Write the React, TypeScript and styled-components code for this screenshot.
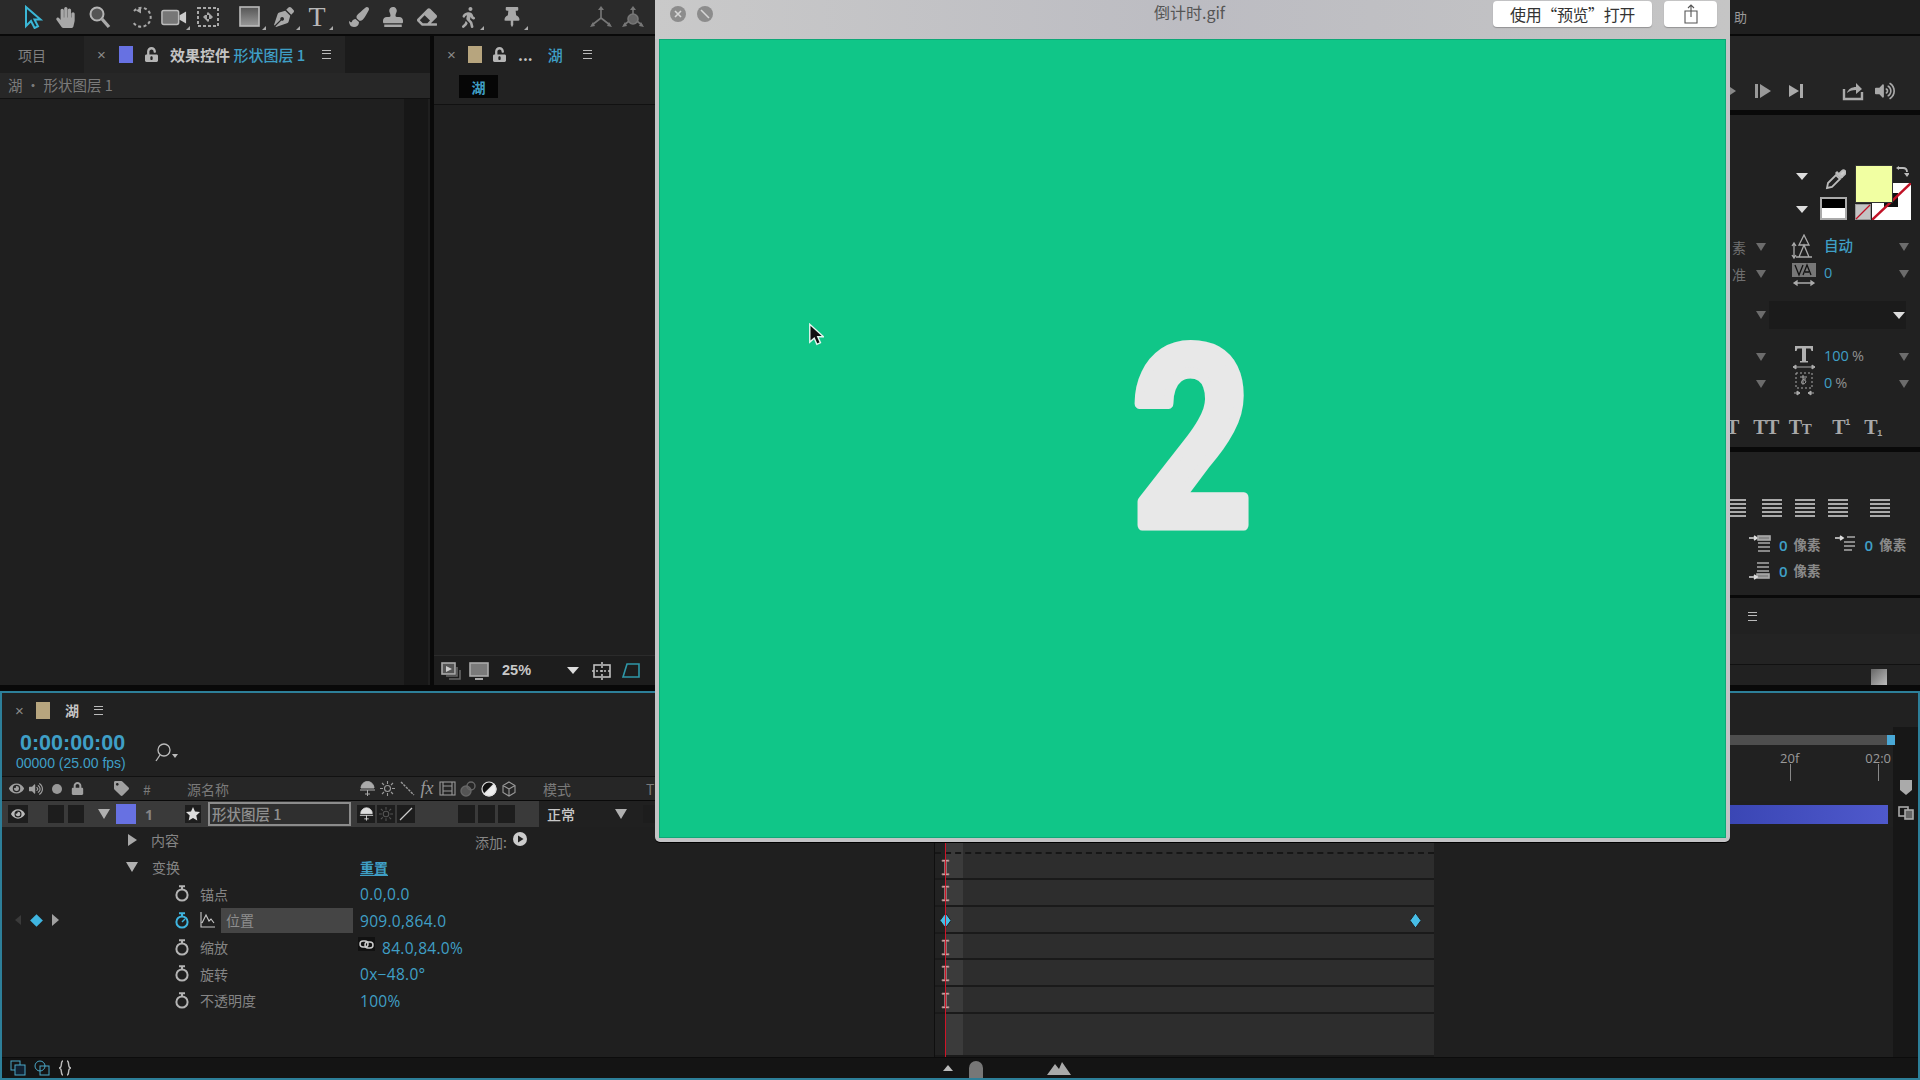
import React from "react";
import styled, { createGlobalStyle } from "styled-components";
import { FaHandPaper, FaPenNib, FaPaintBrush, FaStamp, FaEraser, FaWalking, FaThumbtack, FaVolumeUp, FaEye, FaLock, FaUnlockAlt, FaTag } from "react-icons/fa";

const BLUE = "#3f9fc6";
const LABEL = "#858585";
const ICON = "#a8a8a8";

const Global = createGlobalStyle`
  html, body { margin: 0; padding: 0; background: #090909; }
  * { box-sizing: border-box; }
  body { font-family: "Noto Sans CJK SC", "Liberation Sans", sans-serif; }
`;

const Page = styled.div`
  position: relative; width: 1920px; height: 1080px; overflow: hidden; background: #090909;
  display: flex; flex-direction: column; color: ${LABEL}; font-size: 14px; line-height: 1;
`;

/* ---------- toolbar ---------- */
const Toolbar = styled.div`
  height: 34px; margin-bottom: 2px; background: #2a2a2a; display: flex; align-items: center; flex: none;
`;
const Tool = styled.div<{ $ml: number; $w?: number; $corner?: boolean }>`
  position: relative; width: ${p => p.$w ?? 26}px; height: 26px; margin-left: ${p => p.$ml}px;
  display: flex; align-items: center; justify-content: center; color: ${ICON}; flex: none;
  &::after {
    content: ""; display: ${p => (p.$corner ? "block" : "none")}; position: absolute; right: -3px; bottom: 0;
    border-left: 4px solid transparent; border-bottom: 4px solid #aaa;
  }
`;
const ToolT = styled.span`
  font: 400 28px "Liberation Serif", serif; color: #b8b8b8;
`;
const HelpMenu = styled.div`
  margin-left: auto; width: 190px; height: 34px; background: #1f1f1f; padding: 10px 0 0 4px;
  font-size: 13px; color: #9a9a9a;
`;

/* ---------- main area ---------- */
const Main = styled.div`
  height: 655px; flex: none; display: flex; gap: 4px; padding-bottom: 6px;
`;
const LeftPanel = styled.section`
  width: 430px; margin-left: 0; background: #212121; display: flex; flex-direction: column; flex: none;
`;
const TabRow = styled.div`
  height: 37px; display: flex; align-items: center; background: #1b1b1b; flex: none;
`;
const ProjectTab = styled.div`
  width: 84px; height: 100%; padding-left: 18px; display: flex; align-items: center; color: #808080; background: #1e1e1e;
`;
const ActiveTab = styled.div`
  width: 261px; height: 100%; background: #242424; display: flex; align-items: center; padding-left: 13px;
`;
const Close = styled.span`
  font: 400 15px "Liberation Sans", sans-serif; color: #8a8a8a; width: 18px; flex: none;
`;
const Swatch = styled.span<{ $c: string; $ml?: number }>`
  width: 14px; height: 17px; background: ${p => p.$c}; margin-left: ${p => p.$ml ?? 0}px; flex: none; display: block;
`;
const LockIcon = styled(FaUnlockAlt)<{ $ml: number }>`
  width: 13px; height: 15px; color: #b5b5b5; flex: none; margin-left: ${p => p.$ml}px;
`;
const TabTitle = styled.span<{ $ml: number }>`
  margin-left: ${p => p.$ml}px; font-weight: 700; font-size: 15px; color: #c4c4c4; white-space: nowrap;
`;
const Accent = styled.span`
  color: ${BLUE}; font-weight: 500;
`;
const Burger = styled.span<{ $ml: number; $dim?: boolean }>`
  margin-left: ${p => p.$ml}px; width: 9px; height: 9px; flex: none; display: block;
  border-top: 1.5px solid #bbb; border-bottom: 1.5px solid #bbb; position: relative;
  &::after { content: ""; position: absolute; left: 0; right: 0; top: 2.2px; border-top: 1.5px solid #bbb; }
`;
const SubHeader = styled.div`
  height: 26px; padding: 0 0 0 8px; display: flex; align-items: center; background: #272727; border-bottom: 1px solid #111;
  color: #7b7b7b; font-size: 14.5px; flex: none;
`;
const LeftBody = styled.div`
  flex: 1; display: flex; justify-content: flex-end; background: #1f1f1f; padding-right: 2px;
`;
const Scroll = styled.div`
  width: 24px; background: #171717;
`;

const ViewerPanel = styled.section`
  width: 221px; background: #222; display: flex; flex-direction: column; flex: none;
`;
const ViewerTabs = styled.div`
  height: 37px; display: flex; align-items: center; padding-left: 13px; flex: none;
`;
const ViewerChip = styled.div`
  margin: 2px 0 0 25px; width: 39px; height: 23px; background: #060606; color: ${BLUE}; display: flex; align-items: center;
  justify-content: center; font-size: 14px; font-weight: 700; flex: none;
`;
const ViewerBody = styled.div`
  flex: 1; margin-top: 6px; border-top: 1px solid #111; background: #1f1f1f;
`;
const ViewerFoot = styled.div`
  height: 30px; border-top: 1px solid #2b2b2b; display: flex; align-items: center; background: #1d1d1d; flex: none; color: ${ICON};
`;
const FootSlot = styled.span<{ $ml: number }>`
  display: flex; margin-left: ${p => p.$ml}px; flex: none;
`;
const Zoom = styled.span`
  margin-left: 13px; width: 36px; font-size: 14.5px; font-weight: 700; color: #c8c8c8; font-family: "Liberation Sans", sans-serif;
`;
const WhiteDown = styled.span<{ $ml?: number; $c?: string }>`
  display: block; width: 0; height: 0; margin-left: ${p => p.$ml ?? 0}px; flex: none;
  border-left: 6px solid transparent; border-right: 6px solid transparent; border-top: 7px solid ${p => p.$c ?? "#d0d0d0"};
`;
const Spacer = styled.div`
  flex: 1;
`;

/* ---------- right column ---------- */
const RightCol = styled.aside`
  width: 190px; margin-left: auto; display: flex; flex-direction: column; gap: 5px; flex: none;
`;
const TransportPanel = styled.div`
  height: 74px; background: #242424; padding: 42px 0 0 0; display: flex; align-items: flex-start; color: ${ICON}; flex: none;
`;
const CharPanel = styled.div`
  height: 332px; background: #212121; padding-top: 50px; flex: none;
`;
const ColorRow = styled.div`
  height: 60px; display: flex; flex: none; position: relative;
`;
const ColorDrops = styled.div`
  width: 66px; margin-left: 66px; padding-top: 8px; display: flex; flex-direction: column; gap: 26px;
`;
const SwatchBox = styled.div`
  position: relative; width: 60px; height: 58px; margin-left: auto; margin-right: 11px;
`;
const Fill = styled.div`
  position: absolute; left: 0; top: 0; width: 38px; height: 38px; background: #f1ffa2; border: 1px solid #333; z-index: 2;
`;
const Stroke = styled.svg`
  position: absolute; left: 17px; top: 18px; width: 39px; height: 37px;
`;
const NoneSwatch = styled.svg`
  position: absolute; left: 0; top: 39px; width: 16px; height: 16px;
`;
const SwapIcon = styled.svg`
  position: absolute; right: 0; top: 0; width: 14px; height: 15px;
`;
const BWSwatch = styled.div`
  position: absolute; left: 90px; top: 32px; width: 27px; height: 23px; border: 2px solid #aaa;
  background: linear-gradient(#000 0 45%, #fff 45% 100%);
`;
const Dropper = styled.svg`
  position: absolute; left: 94px; top: 2px; width: 22px; height: 24px;
`;
const MetricRow = styled.div<{ $mt?: number }>`
  height: 27px; margin-top: ${p => p.$mt ?? 0}px; display: grid; align-items: center; flex: none;
  grid-template-columns: 24px 14px 21px 30px 5px 70px 20px 6px;
`;
const CutText = styled.span`
  color: #6f6f6f; font-size: 14px; text-align: left; padding-left: 2px;
`;
const GreyDown = styled.span`
  display: block; justify-self: center; width: 0; height: 0;
  border-left: 5px solid transparent; border-right: 5px solid transparent; border-top: 8px solid #6c6c6c;
`;
const IconCell = styled.span`
  grid-column: 4; display: flex; justify-content: center; color: #aaa;
`;
const Value = styled.span`
  grid-column: 6; color: ${BLUE}; font-size: 14.5px; font-weight: 500; font-family: "Open Sans", "Noto Sans CJK SC", sans-serif;
`;
const Unit = styled.span`
  color: #909090; margin-left: 3px;
`;
const GreyDownEnd = styled(GreyDown)`
  grid-column: 7;
`;
const DropRow = styled.div`
  height: 28px; margin-top: 14px; display: grid; grid-template-columns: 24px 14px 1px 137px 1fr; align-items: center;
`;
const DropBg = styled.span`
  height: 28px; background: #1b1b1b; display: flex; align-items: center; justify-content: flex-end; padding-right: 1px;
`;
const CapsRow = styled.div`
  height: 30px; margin-top: 15px; display: flex; align-items: center; font: 700 20px "Liberation Serif", serif; color: #a8a8a8;
`;
const Cap = styled.span<{ $w: number; $ml: number }>`
  width: ${p => p.$w}px; margin-left: ${p => p.$ml}px; white-space: nowrap; flex: none; display: block;
  text-align: center; letter-spacing: -0.5px;
`;
const SmallCap = styled.span`
  font-size: 15px;
`;
const Script = styled.span<{ $low?: boolean }>`
  font-size: 9px; vertical-align: ${p => (p.$low ? "-2px" : "9px")}; font-family: "Liberation Sans", sans-serif;
`;
const ParaPanel = styled.div`
  height: 143px; background: #212121; padding-top: 41px; flex: none;
`;
const AlignRow = styled.div`
  height: 30px; display: flex; align-items: center; color: #aaa;
`;
const AlignIcon = styled.svg<{ $ml: number }>`
  width: 20px; height: 20px; margin-left: ${p => p.$ml}px; flex: none; display: block;
`;
const IndentRow = styled.div<{ $mt?: number }>`
  height: 26px; margin-top: ${p => p.$mt ?? 0}px; display: flex; align-items: center; color: #aaa; font-weight: 700; font-size: 13.5px;
`;
const IndentNum = styled.span<{ $ml: number }>`
  margin-left: ${p => p.$ml}px; color: ${BLUE}; font-size: 15px; font-family: "Open Sans", sans-serif; font-weight: 600; flex: none;
`;
const IndentUnit = styled.span`
  margin-left: 6px; color: #8a8a8a; flex: none;
`;
const IndentIcon = styled.svg<{ $ml: number }>`
  width: 22px; height: 20px; margin-left: ${p => p.$ml}px; flex: none; display: block;
`;
const LastPanel = styled.div`
  flex: 1; background: #212121; display: flex; flex-direction: column; margin-top: -2px;
`;
const LastHead = styled.div`
  height: 36px; display: flex; align-items: center; padding-left: 18px; flex: none;
`;
const LastBody = styled.div`
  flex: 1; background: #232323;
`;
const LastFoot = styled.div`
  height: 21px; border-top: 1px solid #111; display: flex; padding-left: 141px; align-items: flex-end; flex: none;
`;
const FootPage = styled.span`
  width: 16px; height: 16px; background: linear-gradient(135deg, #666, #bbb); display: block;
`;

/* ---------- timeline ---------- */
const Timeline = styled.section`
  flex: 1; border: 2px solid #2d7f99; background: #1f1f1f; display: flex; flex-direction: column; position: relative;
`;
const TlTabs = styled.div`
  height: 34px; display: flex; align-items: center; padding-left: 13px; flex: none; background: #212121;
`;
const TlTitle = styled.span`
  margin-left: 15px; font-weight: 700; color: #c4c4c4; font-size: 14px;
`;
const TlBody = styled.div`
  flex: 1; display: flex; min-height: 0;
`;
const LayerPane = styled.div`
  width: 932px; flex: none; display: flex; flex-direction: column; background: #1f1f1f;
`;
const TimeRow = styled.div`
  height: 49px; display: flex; align-items: flex-start; padding: 4px 0 0 14px; flex: none; background: #212121;
`;
const TimeText = styled.div`
  width: 135px; flex: none;
`;
const TimeCode = styled.div`
  color: ${BLUE}; font: 700 21.5px "Liberation Sans", sans-serif; line-height: 24px; margin-left: 4px;
`;
const Fps = styled.div`
  color: ${BLUE}; font: 400 14px "Liberation Sans", sans-serif; line-height: 17px; white-space: nowrap;
`;
const SearchWrap = styled.span`
  margin-top: 11px; margin-left: 4px; display: flex; color: #bbb;
`;
const ColHeader = styled.div`
  height: 25px; display: flex; align-items: center; padding-left: 4px; background: #262626; border-top: 1px solid #111;
  border-bottom: 1px solid #090909; flex: none; color: #7a7a7a;
`;
const Cell = styled.span<{ $w: number; $pl?: number }>`
  width: ${p => p.$w}px; padding-left: ${p => p.$pl ?? 0}px; display: flex; align-items: center;
  justify-content: ${p => (p.$pl === undefined ? "center" : "flex-start")}; flex: none; color: #a0a0a0;
`;
const HeadText = styled.span`
  color: #7a7a7a; font-size: 14px; white-space: nowrap;
`;
const FxText = styled.span`
  font: italic 400 18px "Liberation Serif", serif; color: #999;
`;
const LayerRow = styled.div`
  height: 26px; display: flex; align-items: center; padding-left: 4px; background: linear-gradient(90deg, #3a3a3a 0 537px, #202020 537px); flex: none;
`;
const DarkBox = styled.span<{ $ml?: number; $w?: number }>`
  width: ${p => p.$w ?? 16}px; height: 18px; background: #1d1d1d; margin-left: ${p => p.$ml ?? 0}px; flex: none; display: flex;
  align-items: center; justify-content: center; color: #b8b8b8;
`;
const RightTri = styled.span<{ $ml?: number; $c?: string }>`
  display: block; width: 0; height: 0; margin-left: ${p => p.$ml ?? 0}px; flex: none;
  border-top: 6px solid transparent; border-bottom: 6px solid transparent; border-left: 9px solid ${p => p.$c ?? "#a8a8a8"};
`;
const DownTri = styled.span<{ $ml?: number }>`
  display: block; width: 0; height: 0; margin-left: ${p => p.$ml ?? 0}px; flex: none;
  border-left: 6px solid transparent; border-right: 6px solid transparent; border-top: 10px solid #b0b0b0;
`;
const LayerColor = styled.span<{ $ml: number }>`
  width: 20px; height: 20px; background: #6771e2; margin-left: ${p => p.$ml}px; flex: none; display: block;
`;
const LayerNum = styled.span<{ $ml: number }>`
  width: 12px; margin-left: ${p => p.$ml}px; font: 700 14px "Open Sans", sans-serif; color: #858585; flex: none;
`;
const NameBox = styled.span<{ $ml: number }>`
  width: 143px; height: 24px; margin-left: ${p => p.$ml}px; border: 2px solid #8c8c8c; background: #2f2f2f; color: #8f8f8f;
  padding-left: 2px; display: flex; align-items: center; font-size: 14.5px; font-weight: 500; flex: none;
`;
const ModeText = styled.span`
  width: 68px; margin-left: 32px; color: #c8c8c8; font-weight: 500; font-size: 14px; flex: none;
`;
const GroupRow = styled.div`
  height: 26.7px; display: flex; align-items: center; padding-left: 126px; flex: none;
`;
const GroupName = styled.span<{ $w: number }>`
  width: ${p => p.$w}px; margin-left: 14px; color: ${LABEL}; font-size: 14px; flex: none;
`;
const AddLabel = styled.span`
  color: #858585; font-size: 14px; margin-right: 6px; margin-top: 3px;
`;
const AddButton = styled.svg`
  width: 14px; height: 14px; margin-top: -3px; flex: none;
`;
const Reset = styled.span`
  color: ${BLUE}; font-weight: 700; font-size: 14px; text-decoration: underline; text-underline-offset: 2px;
`;
const PropRow = styled.div`
  height: 26.7px; display: grid; grid-template-columns: 172px 18px 8px 160px 1fr; align-items: center; flex: none;
`;
const KeyNav = styled.span`
  display: flex; align-items: center; padding-left: 13px;
`;
const KeyDiamond = styled.span`
  width: 9px; height: 9px; margin-left: 11px; background: #3fb5e0; transform: rotate(45deg); flex: none; display: block;
`;
const NavLeft = styled.span`
  display: block; width: 0; height: 0; border-top: 5px solid transparent; border-bottom: 5px solid transparent; border-right: 6px solid #3a3a3a; flex: none;
`;
const NavRight = styled.span`
  margin-left: 11px; display: block; width: 0; height: 0; border-top: 6px solid transparent; border-bottom: 6px solid transparent;
  border-left: 7px solid #a0a0a0; flex: none;
`;
const Watch = styled.svg`
  width: 16px; height: 17px; grid-column: 2;
`;
const PropLabel = styled.span`
  grid-column: 4; color: ${LABEL}; font-size: 14px; display: flex; align-items: center;
`;
const LabelBox = styled.span`
  width: 132px; height: 25px; margin-left: 6px; background: #454545; padding-left: 5px; display: flex; align-items: center; color: #8e8e8e; flex: none;
`;
const PropValue = styled.span`
  grid-column: 5; color: ${BLUE}; font: 500 15.5px "Open Sans", sans-serif; letter-spacing: 0.3px; display: flex; align-items: center;
  white-space: nowrap; padding-top: 1px;
`;
const LinkBadge = styled.span`
  width: 17px; height: 14px; background: #111; margin: -7px 7px 0 -2px; display: flex; align-items: center; justify-content: center; color: #bbb; flex: none;
`;

const TrackPane = styled.div`
  flex: 1; display: flex; flex-direction: column; position: relative; border-left: 1px solid #0f0f0f; min-width: 0;
`;
const Ruler = styled.div`
  height: 74px; flex: none; display: flex; justify-content: flex-end; background: #212121;
`;
const RulerInner = styled.div`
  width: 166px; margin-right: -2px; padding-top: 8px; display: flex; flex-direction: column; font: 400 13px "Open Sans", sans-serif; color: #9a9a9a;
`;
const NavBar = styled.div`
  height: 10px; background: #4e4e4e; position: relative; flex: none;
  &::after { content: ""; position: absolute; right: 0; top: 0; width: 8px; height: 10px; background: #49a8d6; }
`;
const RulerMarks = styled.div`
  margin-top: 4px; display: flex; justify-content: flex-end; gap: 66px; white-space: nowrap; padding-right: 4px;
`;
const Mark = styled.span`
  position: relative; display: block; padding-bottom: 14px;
  &::after { content: ""; position: absolute; left: 50%; top: 15px; height: 17px; border-left: 1px solid #888; }
`;
const BarRow = styled.div`
  height: 26px; flex: none; display: flex; justify-content: flex-end; align-items: center; padding-right: 5px; background: #202020;
`;
const LayerBar = styled.div`
  width: 160px; height: 19px; background: linear-gradient(90deg, #3a46b4, #4f59cc);
`;
const TrackRow = styled.div<{ $grow?: boolean }>`
  height: ${p => (p.$grow ? "auto" : "26.7px")}; flex: ${p => (p.$grow ? 1 : "none")}; display: flex; position: relative; align-items: center;
`;
const TrackFill = styled.div<{ $dash?: boolean }>`
  width: 499px; height: 100%; flex: none; position: relative; display: flex; align-items: center;
  background: linear-gradient(90deg, #222 0 10px, #3b3b3b 10px 28px, #2d2d2d 28px);
  ${p => (p.$dash ? "border-bottom: 2px dashed #161616;" : "box-shadow: inset 0 -2px 0 #1a1a1a;")}
`;
const IBeam = styled.svg`
  position: absolute; left: 6px; width: 9px; height: 17px;
`;
const KeyFrame = styled.svg<{ $left: number }>`
  position: absolute; left: ${p => p.$left}px; width: 11px; height: 15px;
`;
const Playhead = styled.div`
  position: absolute; left: 10px; top: 100px; bottom: 0; border-left: 1px solid #d01428; z-index: 3;
`;
const SideStrip = styled.div`
  width: 25px; flex: none; background: #171717; display: flex; flex-direction: column; align-items: center; color: #aaa;
`;
const StripIcon = styled.span<{ $mt: number }>`
  margin-top: ${p => p.$mt}px; display: flex;
`;
const TlFoot = styled.div`
  height: 21px; flex: none; background: #141414; border-top: 1px solid #0c0c0c; display: flex; align-items: center; padding-left: 8px; color: ${ICON};
`;
const FootIcon = styled.svg<{ $ml: number }>`
  width: 16px; height: 16px; margin-left: ${p => p.$ml}px; flex: none; display: block;
`;
const Thumb = styled.span`
  width: 14px; height: 17px; margin-left: 13px; background: #777; border-radius: 7px 7px 0 0; flex: none; display: block; align-self: flex-end;
`;
const ZoomSlot = styled.span`
  width: 64px; flex: none; display: block;
`;

/* ---------- floating preview window ---------- */
const Win = styled.div`
  position: absolute; left: 655px; top: 0; width: 1075px; height: 842px; background: #c3c3c5; border-radius: 0 0 5px 5px;
  padding: 0 4px 4px; display: flex; flex-direction: column; box-shadow: 0 1px 0 #000; z-index: 5;
`;
const WinTitleBar = styled.div`
  height: 39px; flex: none; margin: 0 -4px; padding: 0 13px 12px 15px; display: flex; align-items: center;
  background: linear-gradient(90deg, #c9c9c9, #bcbcc2 50%, #c5c5c5);
`;
const TrafficDot = styled.span<{ $ml?: number }>`
  width: 16px; height: 16px; border-radius: 50%; background: #8c8c8c; color: #cfcfcf; margin-left: ${p => p.$ml ?? 0}px;
  display: flex; align-items: center; justify-content: center; flex: none;
`;
const WinTitle = styled.span`
  flex: 1; text-align: center; color: #555; font-size: 16px; padding-left: 322px; margin-top: -3px; white-space: nowrap;
`;
const WinButton = styled.button<{ $w: number; $ml?: number }>`
  width: ${p => p.$w}px; height: 26px; background: #fff; border: 0; border-radius: 4px; padding: 0; margin-left: ${p => p.$ml ?? 0}px;
  display: flex; align-items: center; justify-content: center; flex: none; color: #333; font: 400 16px "Noto Sans CJK SC", sans-serif;
  letter-spacing: -0.4px; box-shadow: 0 1px 1px rgba(0,0,0,.25);
`;
const Stage = styled.div`
  flex: 1; background: #10c688; border: 1px solid #0ea877; position: relative; display: flex; align-items: center; justify-content: center;
`;
const Numeral = styled.svg`
  width: 160px; height: 230px; display: block; overflow: visible;
`;
const NumeralText = styled.text`
  font: 700 249px "Roboto", sans-serif; fill: #e8e8e8; stroke: #e8e8e8; stroke-width: 11px; stroke-linejoin: round;
`;
const Cursor = styled.svg`
  position: absolute; left: 148px; top: 283px; width: 16px; height: 24px;
`;

/* ---------- icons ---------- */
const S = (p: { w?: number; h?: number; vb?: string; children: React.ReactNode; fill?: string; stroke?: string; sw?: number }) => (
  <svg width={p.w ?? 24} height={p.h ?? 24} viewBox={p.vb ?? "0 0 24 24"} fill={p.fill ?? "none"} stroke={p.stroke ?? "currentColor"} strokeWidth={p.sw ?? 1.6}>
    {p.children}
  </svg>
);

const Arrow = () => (
  <S><path d="M6 2v19l5-5 3.6 7 3.4-1.7-3.5-6.8H20.5z" stroke="#3bb7d6" strokeWidth={2} fill="#1d2b30" /></S>
);
const Magnifier = () => (
  <S><circle cx="10" cy="9" r="6.5" fill="#555" stroke="#b5b5b5" strokeWidth={2} /><path d="M15 14l7 8" strokeWidth={3.4} stroke="#aaa" /></S>
);
const Rotate = () => (
  <S><path d="M5 6A9.5 9.5 0 1 1 4 17" strokeDasharray="3 2.4" strokeWidth={2} /><path d="M12 2.5l-5 3 5 3z" fill="currentColor" stroke="none" /></S>
);
const Camera = () => (
  <S w={28} vb="0 0 28 24"><rect x="1" y="5" width="18" height="15" rx="2" fill="#777" stroke="#bbb" /><path d="M20 10l7-4v13l-7-4z" fill="#ccc" stroke="none" /></S>
);
const PanBehind = () => (
  <S><rect x="2" y="3" width="20" height="18" strokeDasharray="3 2" strokeWidth={2} /><path d="M7 12l4-4v8zM17 12l-4-4v8zM12 7l-3 3h6zM12 17l-3-3h6z" fill="currentColor" stroke="none" /></S>
);
const RectTool = () => (
  <svg width="22" height="22" viewBox="0 0 22 22"><defs><linearGradient id="rg" x1="0" y1="0" x2="0" y2="1"><stop offset="0" stopColor="#555" /><stop offset="1" stopColor="#999" /></linearGradient></defs><rect x="1" y="1" width="19" height="19" fill="url(#rg)" stroke="#bbb" strokeWidth="1.6" /></svg>
);
const Axis = ({ circle }: { circle?: boolean }) => (
  <S stroke="#777"><path d="M12 13V3M12 13l-9 7M12 13l9 7" /><path d="M12 1l-3 4h6zM1 22l5-1-2-4zM23 22l-5-1 2-4z" fill="#777" stroke="none" />{circle && <circle cx="12" cy="14" r="5" fill="#666" />}</S>
);
const Stopwatch = ({ on }: { on?: boolean }) => (
  <Watch viewBox="0 0 16 17" fill="none" stroke={on ? "#3fb5e0" : "#b4b4b4"} strokeWidth="2">
    <path d="M5 1.2h6M8 1v3" /><circle cx="8" cy="10" r="5.6" />{on && <path d="M8 10l3-3" strokeWidth="1.5" />}
  </Watch>
);
const Ibeam = () => (
  <IBeam viewBox="0 0 9 17" fill="#e8c8c8" stroke="#8d6d6d" strokeWidth="0.8"><path d="M1 1h7v1.5H5.500v12H8V16H1v-1.5h2.500v-12H1z" /></IBeam>
);
const KeyMark = ({ left }: { left: number }) => (
  <KeyFrame $left={left} viewBox="0 0 11 15"><path d="M5.500 0L11 7.500 5.500 15 0 7.500z" fill="#47bde6" stroke="#222" strokeWidth="1" /></KeyFrame>
);
const AlignGlyph = ({ ml }: { ml: number }) => (
  <AlignIcon $ml={ml} viewBox="0 0 20 20" stroke="#aaa" strokeWidth="2"><path d="M0 2h20M0 6h20M0 10h20M0 14h20M0 18h20" /></AlignIcon>
);
const IndentGlyph = ({ ml, variant }: { ml: number; variant: 0 | 1 | 2 }) => (
  <IndentIcon $ml={ml} viewBox="0 0 22 20" stroke="#aaa" strokeWidth="1.6" fill="none">
    {variant === 0 && <><path d="M0 3h7M5 1l3 2-3 2" stroke="#ddd" /><rect x="9" y="1" width="12" height="4" fill="#888" /><path d="M9 8h12M9 12h12M9 16h12" /></>}
    {variant === 1 && <><path d="M0 3h7M5 1l3 2-3 2" stroke="#ddd" /><path d="M12 2h8M9 7h11M9 11h11M9 15h8" /></>}
    {variant === 2 && <><path d="M8 2h12M8 6h12M8 10h12" /><rect x="8" y="13" width="12" height="4" fill="#888" /><path d="M0 16h7M5 14l3 2-3 2" stroke="#ddd" /></>}
  </IndentIcon>
);

export default function App() {
  return (
    <Page>
      <Global />
      <Toolbar>
        <Tool $ml={19}><Arrow /></Tool>
        <Tool $ml={7}><FaHandPaper size={21} /></Tool>
        <Tool $ml={8}><Magnifier /></Tool>
        <Tool $ml={16}><Rotate /></Tool>
        <Tool $ml={7} $corner><Camera /></Tool>
        <Tool $ml={8}><PanBehind /></Tool>
        <Tool $ml={16} $corner><RectTool /></Tool>
        <Tool $ml={8} $corner><FaPenNib size={20} /></Tool>
        <Tool $ml={7} $corner><ToolT>T</ToolT></Tool>
        <Tool $ml={16}><FaPaintBrush size={20} /></Tool>
        <Tool $ml={8}><FaStamp size={20} /></Tool>
        <Tool $ml={8}><FaEraser size={20} /></Tool>
        <Tool $ml={15} $corner><FaWalking size={21} /></Tool>
        <Tool $ml={18} $corner><FaThumbtack size={20} /></Tool>
        <Tool $ml={63}><Axis /></Tool>
        <Tool $ml={6}><Axis circle /></Tool>
        <HelpMenu>助</HelpMenu>
      </Toolbar>

      <Main>
        <LeftPanel>
          <TabRow>
            <ProjectTab>项目</ProjectTab>
            <ActiveTab>
              <Close>×</Close>
              <Swatch $c="#6771e2" $ml={4} />
              <LockIcon $ml={12} />
              <TabTitle $ml={12}>效果控件 <Accent>形状图层 1</Accent></TabTitle>
              <Burger $ml={17} />
            </ActiveTab>
          </TabRow>
          <SubHeader>湖 • 形状图层 1</SubHeader>
          <LeftBody><Scroll /></LeftBody>
        </LeftPanel>

        <ViewerPanel>
          <ViewerTabs>
            <Close>×</Close>
            <Swatch $c="#b7a57e" $ml={3} />
            <LockIcon $ml={11} />
            <TabTitle $ml={12}>...</TabTitle>
            <TabTitle $ml={15}><Accent>湖</Accent></TabTitle>
            <Burger $ml={20} />
          </ViewerTabs>
          <ViewerChip>湖</ViewerChip>
          <ViewerBody />
          <ViewerFoot>
            <FootSlot $ml={7}><S w={20} h={20} vb="0 0 20 20"><rect x="1" y="2" width="13" height="11" fill="#555" stroke="#aaa" /><path d="M16 6v9H5M19 9v9H8" stroke="#666" /><path d="M5 5l6 3-6 3z" fill="#ccc" stroke="none" /></S></FootSlot>
            <FootSlot $ml={8}><S w={20} h={20} vb="0 0 20 20"><rect x="1" y="2" width="18" height="13" fill="#7a7a7a" stroke="#aaa" /><path d="M6 18h8" strokeWidth={2} /></S></FootSlot>
            <Zoom>25%</Zoom>
            <WhiteDown $ml={29} $c="#ddd" />
            <FootSlot $ml={13}><S w={20} h={20} vb="0 0 20 20" stroke="#c0c0c0"><rect x="2" y="4" width="16" height="12" /><path d="M10 1v18M0 10h20" strokeDasharray="2 2" /></S></FootSlot>
            <FootSlot $ml={9}><S w={20} h={20} vb="0 0 20 20" stroke="#2f97a8"><path d="M6 3h12v13H2z" /></S></FootSlot>
          </ViewerFoot>
        </ViewerPanel>

        <RightCol>
          <TransportPanel>
            <Tool $ml={-8} $w={18}><RightTri $c="#888" /></Tool>
            <Tool $ml={13} $w={20}><S w={18} h={18} vb="0 0 18 18" fill="#999" stroke="none"><rect x="1" y="2" width="3" height="14" /><path d="M6 2l11 7-11 7z" /></S></Tool>
            <Tool $ml={13} $w={20}><S w={18} h={18} vb="0 0 18 18" fill="#aaa" stroke="none"><path d="M2 3l10 6-10 6z" /><rect x="13" y="2" width="3" height="14" /></S></Tool>
            <Tool $ml={35} $w={24}><S w={22} h={22} vb="0 0 22 22" stroke="#aaa" sw={2.4}><path d="M2 9v10h18v-7" /><path d="M5 13c1-4 5-6 9-6V3l6 6-6 5v-4c-4 0-7 1-9 3z" fill="#aaa" stroke="none" /></S></Tool>
            <Tool $ml={8} $w={24}><FaVolumeUp size={20} /></Tool>
          </TransportPanel>

          <CharPanel>
            <ColorRow>
              <ColorDrops><WhiteDown $c="#ddd" /><WhiteDown $c="#ddd" /></ColorDrops>
              <Dropper viewBox="0 0 22 24" fill="none" stroke="#bbb" strokeWidth="1.8"><path d="M3 21l1-5 8-8 4 4-8 8z" /><path d="M12 5l6 6" strokeWidth="3" /><path d="M15 7l3-3a2 2 0 0 1 3 3l-3 3z" fill="#ccc" /></Dropper>
              <BWSwatch />
              <SwatchBox>
                <Fill />
                <SwapIcon viewBox="0 0 14 15" fill="none" stroke="#bbb" strokeWidth="1.8"><path d="M3 3h5c3 0 4 2 4 4" /><path d="M1 3l3-2v4zM9 8h6l-3 4z" fill="#bbb" stroke="none" /></SwapIcon>
                <Stroke viewBox="0 0 39 37"><path d="M0 0h39v37H0zM20 0v19H0" fill="#fff" stroke="none" /><rect x="12" y="10" width="14" height="14" fill="#111" /><path d="M0 37L39 0" stroke="#c01226" strokeWidth="2.4" /></Stroke>
                <NoneSwatch viewBox="0 0 16 16"><rect x="0.5" y="0.5" width="15" height="15" fill="#c4c4c4" stroke="#999" /><path d="M1 15L15 1" stroke="#c01226" strokeWidth="1.2" /></NoneSwatch>
              </SwatchBox>
            </ColorRow>
            <MetricRow $mt={8}>
              <CutText>素</CutText><GreyDown />
              <IconCell><S w={26} h={26} vb="0 0 26 26" sw={1.3}><path d="M13 1l-5 10h10zM13 11l-5 12h10zM5 23h16" /><path d="M3 10v13M1 12l2-3 2 3M1 21l2 3 2-3" /></S></IconCell>
              <Value>自动</Value><GreyDownEnd />
            </MetricRow>
            <MetricRow>
              <CutText>准</CutText><GreyDown />
              <IconCell><S w={26} h={26} vb="0 0 26 26" sw={1.3}><rect x="1" y="2" width="24" height="14" fill="#777" stroke="none" /><path d="M4 4l4 10 4-10M12 14l4-10 4 10M14 11h4" stroke="#111" /><path d="M3 22h20M3 22l3-2v4zM23 22l-3-2v4z" fill="#bbb" /></S></IconCell>
              <Value>0</Value><GreyDownEnd />
            </MetricRow>
            <DropRow>
              <span /><GreyDown /><span />
              <DropBg><WhiteDown $c="#ddd" /></DropBg>
            </DropRow>
            <MetricRow $mt={14}>
              <span /><GreyDown />
              <IconCell><S w={26} h={26} vb="0 0 26 26" fill="#b0b0b0" stroke="none"><path d="M4 2h18v5h-1.500l-1-2.500H15V17h2v1.500H9V17h2V4.500H6.500l-1 2.500H4z" /><path d="M2 23h22M2 23l3-2v4zM24 23l-3-2v4z" stroke="#aaa" strokeWidth="1" /></S></IconCell>
              <Value>100<Unit>%</Unit></Value><GreyDownEnd />
            </MetricRow>
            <MetricRow>
              <span /><GreyDown />
              <IconCell><S w={24} h={24} vb="0 0 24 24" stroke="#aaa" sw={1}><rect x="4" y="1" width="16" height="15" strokeDasharray="2 2" /><path d="M8 5h7M11 3v9M14 7c-4-1-6 5-3 5s4-4 1-4" /><path d="M2 21h6M8 21l-3-2v4zM22 21h-6M16 21l3-2v4z" fill="#aaa" /></S></IconCell>
              <Value>0<Unit>%</Unit></Value><GreyDownEnd />
            </MetricRow>
            <CapsRow>
              <Cap $w={10} $ml={-4}>T</Cap>
              <Cap $w={26} $ml={17}>TT</Cap>
              <Cap $w={26} $ml={8}>T<SmallCap>T</SmallCap></Cap>
              <Cap $w={22} $ml={17}>T<Script>1</Script></Cap>
              <Cap $w={20} $ml={11}>T<Script $low>1</Script></Cap>
            </CapsRow>
          </CharPanel>

          <ParaPanel>
            <AlignRow>
              <AlignGlyph ml={-4} /><AlignGlyph ml={16} /><AlignGlyph ml={13} /><AlignGlyph ml={13} /><AlignGlyph ml={22} />
            </AlignRow>
            <IndentRow $mt={9}>
              <IndentGlyph ml={19} variant={0} /><IndentNum $ml={8}>0</IndentNum><IndentUnit>像素</IndentUnit>
              <IndentGlyph ml={14} variant={1} /><IndentNum $ml={8}>0</IndentNum><IndentUnit>像素</IndentUnit>
            </IndentRow>
            <IndentRow>
              <IndentGlyph ml={19} variant={2} /><IndentNum $ml={8}>0</IndentNum><IndentUnit>像素</IndentUnit>
            </IndentRow>
          </ParaPanel>

          <LastPanel>
            <LastHead><Burger $ml={0} /></LastHead>
            <LastBody />
            <LastFoot><FootPage /></LastFoot>
          </LastPanel>
        </RightCol>
      </Main>

      <Timeline>
        <TlTabs>
          <Close>×</Close>
          <Swatch $c="#b7a57e" $ml={3} />
          <TlTitle>湖</TlTitle>
          <Burger $ml={15} />
        </TlTabs>
        <TlBody>
          <LayerPane>
            <TimeRow>
              <TimeText>
                <TimeCode>0:00:00:00</TimeCode>
                <Fps>00000 (25.00 fps)</Fps>
              </TimeText>
              <SearchWrap><S w={26} h={22} vb="0 0 26 22" sw={1.3} stroke="#bbb"><circle cx="9" cy="8" r="6" /><path d="M5 13l-4 6" /><path d="M17 12h6l-3 4z" fill="#bbb" stroke="none" /></S></SearchWrap>
            </TimeRow>
            <ColHeader>
              <Cell $w={20}><FaEye size={15} /></Cell>
              <Cell $w={20}><FaVolumeUp size={14} /></Cell>
              <Cell $w={22}><S w={10} h={10} vb="0 0 10 10" fill="#999" stroke="none"><circle cx="5" cy="5" r="5" /></S></Cell>
              <Cell $w={18}><FaLock size={13} /></Cell>
              <Cell $w={24} />
              <Cell $w={22}><FaTag size={15} /></Cell>
              <Cell $w={9} />
              <Cell $w={12}><HeadText>#</HeadText></Cell>
              <Cell $w={204} $pl={34}><HeadText>源名称</HeadText></Cell>
              <Cell $w={20}><S w={17} h={15} vb="0 0 17 15" fill="#aaa" stroke="#aaa" sw={1}><path d="M2 7a6.500 6.500 0 0 1 13 0zM1 9h15M8.500 9v6M6 13h5" /></S></Cell>
              <Cell $w={20}><S w={15} h={15} vb="0 0 15 15" stroke="#999" sw={1.1}><circle cx="7.500" cy="7.500" r="3" /><path d="M7.500 0v3M7.500 12v3M0 7.500h3M12 7.500h3M2 2l2 2M11 11l2 2M13 2l-2 2M4 11l-2 2" /></S></Cell>
              <Cell $w={20}><S w={15} h={15} vb="0 0 15 15" stroke="#999" sw={1.4}><path d="M1 1l13 13" strokeDasharray="2.500 1" /></S></Cell>
              <Cell $w={20}><FxText>fx</FxText></Cell>
              <Cell $w={20}><S w={17} h={15} vb="0 0 17 15" stroke="#999" sw={1.1}><rect x="1" y="1" width="15" height="13" /><path d="M4 1v13M13 1v13M4 5h9M4 10h9" /></S></Cell>
              <Cell $w={22}><S w={17} h={16} vb="0 0 17 16" stroke="#666" sw={1.4}><circle cx="6" cy="10" r="5" fill="#555" /><circle cx="11" cy="5" r="4" /></S></Cell>
              <Cell $w={20}><S w={16} h={16} vb="0 0 16 16" stroke="#ddd" sw={1.2}><circle cx="8" cy="8" r="7" fill="#111" /><path d="M8 1a7 7 0 0 1 0 14z" fill="#eee" transform="rotate(45 8 8)" /></S></Cell>
              <Cell $w={20}><S w={16} h={16} vb="0 0 16 16" stroke="#999" sw={1.1}><path d="M8 1l6 3.500v7L8 15l-6-3.500v-7zM8 8l6-3.500M8 8v7M8 8L2 4.500" /></S></Cell>
              <Cell $w={24} />
              <Cell $w={103} $pl={0}><HeadText>模式</HeadText></Cell>
              <Cell $w={20} $pl={0}><HeadText>T</HeadText></Cell>
            </ColHeader>
            <LayerRow>
              <DarkBox $w={20} $ml={2}><FaEye size={14} /></DarkBox>
              <DarkBox $ml={20} />
              <DarkBox $ml={4} />
              <DownTri $ml={14} />
              <LayerColor $ml={6} />
              <LayerNum $ml={9}>1</LayerNum>
              <DarkBox $w={16} $ml={28}><S w={14} h={14} vb="0 0 14 14" fill="#ddd" stroke="none"><path d="M7 0l2 4.500 5 .6-3.700 3.300 1 5L7 11l-4.300 2.400 1-5L0 5.100l5-.6z" /></S></DarkBox>
              <NameBox $ml={7}>形状图层 1</NameBox>
              <DarkBox $w={18} $ml={6}><S w={15} h={14} vb="0 0 17 15" fill="#ddd" stroke="#ddd" sw={1}><path d="M2 7a6.500 6.500 0 0 1 13 0zM1 9h15M8.500 9v6M6 13h5" /></S></DarkBox>
              <DarkBox $w={18} $ml={2}><S w={14} h={14} vb="0 0 15 15" stroke="#555" sw={1.1}><circle cx="7.500" cy="7.500" r="3" /><path d="M7.500 0v3M7.500 12v3M0 7.500h3M12 7.500h3M2 2l2 2M11 11l2 2M13 2l-2 2M4 11l-2 2" /></S></DarkBox>
              <DarkBox $w={18} $ml={2}><S w={14} h={14} vb="0 0 14 14" stroke="#ccc" sw={1.2}><path d="M1 13L13 1" /></S></DarkBox>
              <DarkBox $w={17} $ml={43} />
              <DarkBox $w={17} $ml={3} />
              <DarkBox $w={17} $ml={3} />
              <ModeText>正常</ModeText>
              <DownTri />
              <DarkBox $w={17} $ml={16} />
            </LayerRow>
            <GroupRow>
              <RightTri />
              <GroupName $w={324}>内容</GroupName>
              <AddLabel>添加:</AddLabel>
              <AddButton viewBox="0 0 14 14"><circle cx="7" cy="7" r="7" fill="#ccc" /><path d="M5 3.500L10.500 7 5 10.500z" fill="#222" /></AddButton>
            </GroupRow>
            <GroupRow>
              <DownTri $ml={-2} />
              <GroupName $w={208}>变换</GroupName>
              <Reset>重置</Reset>
            </GroupRow>
            <PropRow>
              <span />
              <Stopwatch />
              <PropLabel>锚点</PropLabel>
              <PropValue>0.0,0.0</PropValue>
            </PropRow>
            <PropRow>
              <KeyNav><NavLeft /><KeyDiamond /><NavRight /></KeyNav>
              <Stopwatch on />
              <PropLabel>
                <S w={15} h={16} vb="0 0 15 16" stroke="#c8c8c8" sw={1.1}><path d="M1 0v15h14M2 11l4-8 3 6 2-2 3 4" /></S>
                <LabelBox>位置</LabelBox>
              </PropLabel>
              <PropValue>909.0,864.0</PropValue>
            </PropRow>
            <PropRow>
              <span />
              <Stopwatch />
              <PropLabel>缩放</PropLabel>
              <PropValue><LinkBadge><S w={15} h={9} vb="0 0 15 9" sw={1.5} stroke="#ccc"><rect x="1" y="1" width="8" height="6" rx="3" /><rect x="6" y="2" width="8" height="6" rx="3" /></S></LinkBadge>84.0,84.0%</PropValue>
            </PropRow>
            <PropRow>
              <span />
              <Stopwatch />
              <PropLabel>旋转</PropLabel>
              <PropValue>0x−48.0°</PropValue>
            </PropRow>
            <PropRow>
              <span />
              <Stopwatch />
              <PropLabel>不透明度</PropLabel>
              <PropValue>100%</PropValue>
            </PropRow>
            <Spacer />
          </LayerPane>

          <TrackPane>
            <Ruler>
              <RulerInner>
                <NavBar />
                <RulerMarks><Mark>20f</Mark><Mark>02:0</Mark></RulerMarks>
              </RulerInner>
            </Ruler>
            <BarRow><LayerBar /></BarRow>
            <TrackRow><TrackFill $dash /></TrackRow>
            <TrackRow><TrackFill><Ibeam /></TrackFill></TrackRow>
            <TrackRow><TrackFill><Ibeam /></TrackFill></TrackRow>
            <TrackRow><TrackFill><KeyMark left={5} /><KeyMark left={475} /></TrackFill></TrackRow>
            <TrackRow><TrackFill><Ibeam /></TrackFill></TrackRow>
            <TrackRow><TrackFill><Ibeam /></TrackFill></TrackRow>
            <TrackRow><TrackFill><Ibeam /></TrackFill></TrackRow>
            <TrackRow $grow><TrackFill /></TrackRow>
            <Playhead />
          </TrackPane>
          <SideStrip>
            <StripIcon $mt={53}><S w={14} h={16} vb="0 0 14 16" fill="#aaa" stroke="none"><path d="M1 0h12v10l-6 5-6-5z" /></S></StripIcon>
            <StripIcon $mt={10}><S w={16} h={14} vb="0 0 16 14" stroke="#aaa"><rect x="1" y="1" width="9" height="9" /><rect x="7" y="4" width="8" height="9" fill="#666" /></S></StripIcon>
          </SideStrip>
        </TlBody>
        <TlFoot>
          <FootIcon $ml={0} viewBox="0 0 16 16" fill="#4aa7c8" stroke="#4aa7c8"><rect x="1" y="1" width="9" height="9" fill="none" /><rect x="5" y="5" width="10" height="10" fill="#123" /></FootIcon>
          <FootIcon $ml={8} viewBox="0 0 16 16" fill="none" stroke="#4aa7c8"><circle cx="6" cy="6" r="5" /><rect x="6" y="6" width="9" height="9" /></FootIcon>
          <FootIcon $ml={7} viewBox="0 0 16 16" fill="none" stroke="#bbb" strokeWidth="1.4"><path d="M6 1C3 1 6 8 2 8c4 0 1 7 4 7M10 1c3 0 0 7 4 7-4 0-1 7-4 7" /></FootIcon>
          <FootIcon $ml={867} viewBox="0 0 16 16" fill="#bbb" stroke="none"><path d="M8 5l5 6H3z" /></FootIcon>
          <Thumb />
          <ZoomSlot />
          <svg width="24" height="14" viewBox="0 0 24 14" fill="#aaa"><path d="M0 14L8 3l4 5 3-7 9 13z" /></svg>
        </TlFoot>
      </Timeline>

      <Win>
        <WinTitleBar>
          <TrafficDot><svg width="8" height="8" viewBox="0 0 8 8" stroke="#d6d6d6" strokeWidth="1.6"><path d="M1 1l6 6M7 1L1 7" /></svg></TrafficDot>
          <TrafficDot $ml={11}><svg width="10" height="10" viewBox="0 0 10 10" stroke="#d6d6d6" strokeWidth="1.6"><path d="M1 1l8 8" /></svg></TrafficDot>
          <WinTitle>倒计时.gif</WinTitle>
          <WinButton $w={159} $ml={149}>使用“预览”打开</WinButton>
          <WinButton $w={53} $ml={12}>
            <svg width="14" height="20" viewBox="0 0 14 20" fill="none" stroke="#555" strokeWidth="1.1"><path d="M1 7h12v12H1zM7 13V1M4 4l3-3 3 3" /></svg>
          </WinButton>
        </WinTitleBar>
        <Stage>
          <Numeral viewBox="0 0 160 230"><g transform="translate(79 201) scale(0.84 1)"><NumeralText x="0" y="0" textAnchor="middle">2</NumeralText></g></Numeral>
          <Cursor viewBox="0 0 18 26"><path d="M2 1v20l5-4.500 3 7 4-1.800-3-6.700h6.500z" fill="#111" stroke="#e6f7f1" strokeWidth="1.6" /></Cursor>
        </Stage>
      </Win>
    </Page>
  );
}
